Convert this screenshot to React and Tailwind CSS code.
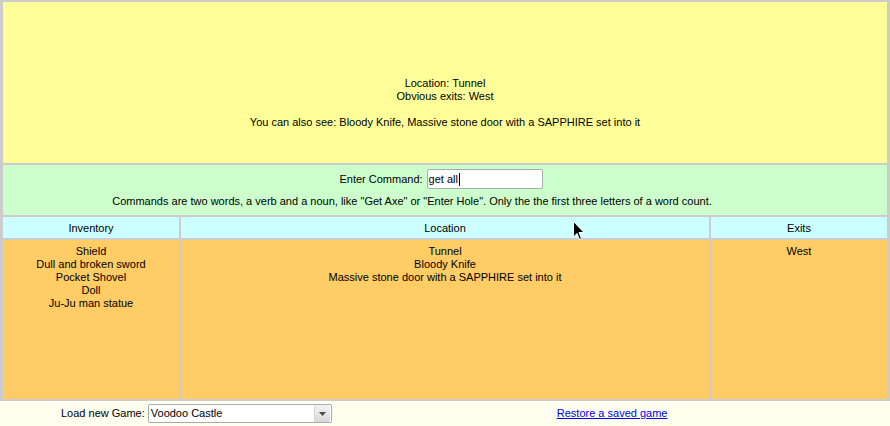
import React from 'react';

const inventory = ['Shield', 'Dull and broken sword', 'Pocket Shovel', 'Doll', 'Ju-Ju man statue'];
const here = ['Tunnel', 'Bloody Knife', 'Massive stone door with a SAPPHIRE set into it'];

export default function App() {
  return (
    <div className="relative w-[890px] h-[426px] overflow-hidden bg-[#fffff0] font-['Liberation_Sans',Arial,sans-serif] text-[11px] leading-[13px] text-black">
      <div className="bg-[#cccccc] px-[3px] pt-[2px] pb-[2px] flex flex-col gap-[2px]">
        {/* room description */}
        <div className="h-[161px] bg-[#ffff99] pt-[75px] text-center">
          <div>Location: Tunnel</div>
          <div>Obvious exits: West</div>
          <div className="h-[13px]"></div>
          <div>You can also see: Bloody Knife, Massive stone door with a SAPPHIRE set into it</div>
        </div>

        {/* command entry */}
        <div className="h-[50px] bg-[#ccffcc] pt-[4px] text-center">
          <div className="flex items-center justify-center pr-[8px]">
            <span className="mr-[4px]">Enter Command:</span>
            <div className="w-[116px] h-[20px] bg-white border border-[#a5acb2] rounded-[2px] flex items-center pl-[1px]">
              get all<span className="inline-block w-px h-[13px] bg-black ml-[1px]"></span>
            </div>
          </div>
          <div className="mt-[6px] pr-[66px]">
            Commands are two words, a verb and a noun, like "Get Axe" or "Enter Hole". Only the the first three letters of a word count.
          </div>
        </div>

        {/* table */}
        <div className="grid grid-cols-[176px_528px_176px] gap-[2px]">
          <div className="h-[21px] bg-[#ccffff] pt-[5px] text-center">Inventory</div>
          <div className="h-[21px] bg-[#ccffff] pt-[5px] text-center">Location</div>
          <div className="h-[21px] bg-[#ccffff] pt-[5px] text-center">Exits</div>

          <div className="h-[159px] bg-[#ffcc66] pt-[5px] text-center">
            {inventory.map((item) => (
              <div key={item}>{item}</div>
            ))}
          </div>
          <div className="h-[159px] bg-[#ffcc66] pt-[5px] text-center">
            {here.map((item) => (
              <div key={item}>{item}</div>
            ))}
          </div>
          <div className="h-[159px] bg-[#ffcc66] pt-[5px] text-center">
            <div>West</div>
          </div>
        </div>
      </div>

      {/* bottom bar */}
      <div className="flex items-center h-[24px] pl-[61px] pt-[1px]">
        <span className="mr-[3px]">Load new Game:</span>
        <div className="w-[184px] h-[19px] bg-white border border-[#a5acb2] rounded-[2px] flex items-center justify-between">
          <span className="pl-[2px]">Voodoo Castle</span>
          <div className="w-[16px] h-[17px] mr-[1px] bg-gradient-to-b from-[#f4f4f4] to-[#d8d8d8] border-l border-[#d0d0d0] rounded-[2px] flex items-center justify-center">
            <svg width="7" height="4" viewBox="0 0 7 4">
              <path d="M0 0 L7 0 L3.5 4 Z" fill="#4d4d4d" />
            </svg>
          </div>
        </div>
        <a href="#" className="ml-[225px] text-[#0000ee] underline">Restore a saved game</a>
      </div>

      {/* mouse pointer */}
      <svg className="absolute left-[573px] top-[221px]" width="12" height="20" viewBox="0 0 12 20">
        <path d="M0.5 0.5 L0.5 16 L4 12.5 L6.5 18.5 L8.5 17.5 L6 11.5 L11 11.5 Z" fill="#000" stroke="#fff" strokeWidth="1" />
      </svg>
    </div>
  );
}
